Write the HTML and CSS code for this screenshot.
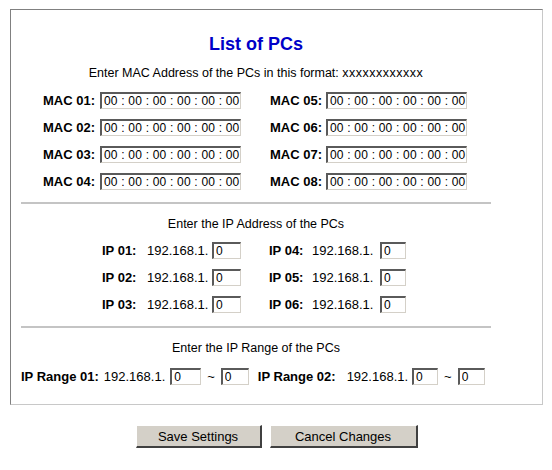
FILE: index.html
```html
<!DOCTYPE html>
<html lang="en">
<head>
  <meta charset="UTF-8">
  <title>List of PCs</title>
  <link rel="stylesheet" href="styles.css">
</head>
<body>

  <div class="panel">
    <h1 class="title">List of PCs</h1>
    <p class="hint">Enter MAC Address of the PCs in this format: <span class="fmt">xxxxxxxxxxxx</span></p>

    <div class="mac-grid">
      <span class="lbl">MAC 01:</span><input class="mac" value="00 : 00 : 00 : 00 : 00 : 00">
      <span class="lbl">MAC 05:</span><input class="mac" value="00 : 00 : 00 : 00 : 00 : 00">
      <span class="lbl">MAC 02:</span><input class="mac" value="00 : 00 : 00 : 00 : 00 : 00">
      <span class="lbl">MAC 06:</span><input class="mac" value="00 : 00 : 00 : 00 : 00 : 00">
      <span class="lbl">MAC 03:</span><input class="mac" value="00 : 00 : 00 : 00 : 00 : 00">
      <span class="lbl">MAC 07:</span><input class="mac" value="00 : 00 : 00 : 00 : 00 : 00">
      <span class="lbl">MAC 04:</span><input class="mac" value="00 : 00 : 00 : 00 : 00 : 00">
      <span class="lbl">MAC 08:</span><input class="mac" value="00 : 00 : 00 : 00 : 00 : 00">
    </div>

    <div class="rule"></div>

    <p class="hint">Enter the IP Address of the PCs</p>

    <div class="ip-grid">
      <span class="lbl">IP 01:</span><span class="pre">192.168.1.</span><input class="ip" value="0">
      <span class="lbl">IP 04:</span><span class="pre">192.168.1.</span><input class="ip ip-r" value="0">
      <span class="lbl">IP 02:</span><span class="pre">192.168.1.</span><input class="ip" value="0">
      <span class="lbl">IP 05:</span><span class="pre">192.168.1.</span><input class="ip ip-r" value="0">
      <span class="lbl">IP 03:</span><span class="pre">192.168.1.</span><input class="ip" value="0">
      <span class="lbl">IP 06:</span><span class="pre">192.168.1.</span><input class="ip ip-r" value="0">
    </div>

    <div class="rule rule-2"></div>

    <p class="hint">Enter the IP Range of the PCs</p>

    <div class="range-row">
      <span class="lbl r-lbl">IP Range 01:</span>
      <span class="pre r-pre">192.168.1.</span>
      <input class="ip r1" value="0">
      <span class="tilde">~</span>
      <input class="ip r2" value="0">
      <span class="lbl r-lbl r-lbl-2">IP Range 02:</span>
      <span class="pre r-pre r-pre-2">192.168.1.</span>
      <input class="ip r3" value="0">
      <span class="tilde">~</span>
      <input class="ip r4" value="0">
    </div>
  </div>

  <div class="buttons">
    <button class="btn btn-save">Save Settings</button>
    <button class="btn btn-cancel">Cancel Changes</button>
  </div>

</body>
</html>
```

FILE: styles.css
```css
*{
margin: 0;
padding: 0;
box-sizing: border-box;
font-family: 'Liberation Sans', Arial, sans-serif;
}

body{
background: #fff;
color: #000;
}

.panel{
width: 533px;
height: 396px;
margin: 9px 0 0 10px;
padding: 0 51px 0 10px;
border: 1px solid;
border-color: #808080 #c8c8c8 #c8c8c8 #808080;
}

.title{
margin-top: 24px;
height: 20px;
line-height: 20px;
font-size: 18px;
font-weight: bold;
color: #0000c8;
text-align: center;
}

.hint{
height: 16px;
line-height: 16px;
margin-top: 11px;
font-size: 12.5px;
text-align: center;
white-space: nowrap;
}

.fmt{
letter-spacing: 0.5px;
}

.lbl{
font-size: 13px;
font-weight: bold;
line-height: 17px;
white-space: nowrap;
}

.pre{
font-size: 13px;
line-height: 17px;
white-space: nowrap;
}

input{
height: 17px;
border-style: solid;
border-width: 2px 1px 1px 2px;
border-color: #5a5a5a #d4d0c8 #d4d0c8 #5a5a5a;
background: #fff;
font-size: 12px;
line-height: 13px;
color: #000;
padding: 0 0 0 2px;
outline: none;
}

.mac-grid{
display: grid;
grid-template-columns: 57px 170px 56px 141px;
grid-auto-rows: 17px;
row-gap: 10px;
margin: 11px 0 0 22px;
}

.mac{
width: 141px;
letter-spacing: 0.2px;
}

.rule{
height: 2px;
margin-top: 12px;
background: #c4c4c4;
}

.rule-2{
margin-top: 13px;
}

.rule + .hint{
margin-top: 12px;
}

.ip-grid{
display: grid;
grid-template-columns: 45px 65px 57px 43px 68px 26px;
grid-auto-rows: 17px;
row-gap: 10px;
margin: 10px 0 0 81px;
}

.ip{
width: 29px;
}

.ip-r{
width: 26px;
}

.range-row{
display: flex;
align-items: center;
height: 17px;
margin-top: 12px;
}

.r-lbl{
margin-right: 5px;
}

.r-lbl-2{
margin-left: 9px;
margin-right: 11px;
}

.r-pre{
margin-right: 5px;
}

.r-pre-2{
margin-right: 4px;
}

.tilde{
font-size: 13px;
margin: 0 6px;
}

.r1{ width: 31px; }
.r2{ width: 28px; }
.r3{ width: 26px; }
.r4{ width: 27px; }

.buttons{
width: 533px;
margin: 20px 0 0 10px;
display: flex;
justify-content: center;
gap: 8px;
}

.btn{
height: 23px;
background: #d4d0c8;
border-style: solid;
border-width: 1px 2px 2px 1px;
border-color: #fff #404040 #404040 #fff;
font-size: 13px;
color: #000;
}

.btn-save{
width: 126px;
}

.btn-cancel{
width: 148px;
}
```
